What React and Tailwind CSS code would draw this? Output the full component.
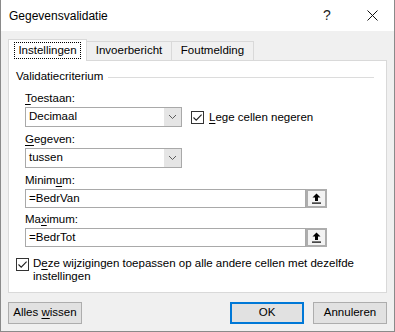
import React from 'react'

function Check() {
  return (
    <span className="w-[13px] h-[13px] border border-[#333333] bg-white flex items-center justify-center shrink-0">
      <svg width="11" height="11" viewBox="0 0 11 11">
        <path d="M1.5 5.5 L4.2 8.2 L9.6 2.6" fill="none" stroke="#1f1f1f" strokeWidth="1.1" />
      </svg>
    </span>
  )
}

function Select({ value }) {
  return (
    <div className="w-[157px] h-[20px] border border-[#a9a9a9] bg-white flex shrink-0">
      <div className="flex-1 pl-[3px] flex items-center">{value}</div>
      <div className="w-[17px] bg-[#e5e5e5] flex items-center justify-center">
        <svg width="9" height="6" viewBox="0 0 9 6">
          <path d="M1 1 L4.5 4.5 L8 1" fill="none" stroke="#5c5c5c" strokeWidth="1" />
        </svg>
      </div>
    </div>
  )
}

function RefInput({ value }) {
  return (
    <div className="w-[302px] h-[19px] flex">
      <div className="flex-1 border border-[#a9a9a9] bg-white pl-[3px] flex items-center">{value}</div>
      <div className="w-[21px] border-2 border-[#adadad] bg-[#f3f3f3] flex items-center justify-center">
        <svg width="9" height="11" viewBox="0 0 9 11">
          <path d="M4.5 0.5 L8.5 4.5 L6 4.5 L6 8 L3 8 L3 4.5 L0.5 4.5 Z" fill="#000" />
          <rect x="0" y="9.5" width="9" height="1.2" fill="#000" />
        </svg>
      </div>
    </div>
  )
}

function Label({ before, u, after }) {
  return (
    <div className="h-[16px] leading-[16px]">
      {before}
      <span className="underline underline-offset-2">{u}</span>
      {after}
    </div>
  )
}

function Button({ children, primary }) {
  return (
    <button
      className={`w-[74px] h-[22px] bg-[#e1e1e1] flex items-center justify-center ${
        primary ? 'border-2 border-[#0078d7]' : 'border border-[#adadad]'
      }`}
    >
      {children}
    </button>
  )
}

export default function App() {
  return (
    <div className="w-[395px] h-[332px] bg-[#f0f0f0] border-x border-b border-[#8a8a8a] flex flex-col text-[11.5px] text-black font-['Liberation_Sans',Arial,sans-serif] overflow-hidden">
      {/* title bar */}
      <div className="h-[31px] bg-white flex items-center pl-[8px] shrink-0">
        <span className="text-[12px]">Gegevensvalidatie</span>
        <span className="ml-auto w-[20px] text-center text-[14px] text-[#222]">?</span>
        <span className="ml-[25px] mr-[12px] w-[20px] flex items-center justify-center">
          <svg width="11" height="11" viewBox="0 0 11 11">
            <path d="M0.5 0.5 L10.5 10.5 M10.5 0.5 L0.5 10.5" stroke="#111" strokeWidth="1" />
          </svg>
        </span>
      </div>

      <div className="px-[7px] flex flex-col">
        {/* tabs */}
        <div className="mt-[7px] h-[22px] flex items-end">
          <div className="w-[79px] h-[22px] bg-white border border-b-0 border-[#d9d9d9] relative z-10 -mb-px flex items-center justify-center">
            <span className="px-[3px] h-[17px] leading-[15px] border border-dotted border-black">Instellingen</span>
          </div>
          <div className="w-[85px] h-[19px] border border-b-0 border-l-0 border-[#d9d9d9] flex items-center justify-center">
            Invoerbericht
          </div>
          <div className="w-[82px] h-[19px] border border-b-0 border-l-0 border-[#d9d9d9] flex items-center justify-center">
            Foutmelding
          </div>
        </div>

        {/* panel */}
        <div className="h-[233px] bg-white border border-[#d9d9d9] px-[7px] flex flex-col">
          <div className="mt-[8px] h-[16px] flex items-center gap-[5px] mr-[5px]">
            <span>Validatiecriterium</span>
            <div className="flex-1 h-px bg-[#dcdcdc]" />
          </div>

          <div className="pl-[9px] flex flex-col">
            <div className="mt-[5px]">
              <Label u="T" after="oestaan:" />
            </div>
            <div className="mt-px flex items-center">
              <Select value="Decimaal" />
              <div className="ml-[9px] flex items-center gap-[5px]">
                <Check />
                <Label u="L" after="ege cellen negeren" />
              </div>
            </div>
            <div className="mt-[4px]">
              <Label u="G" after="egeven:" />
            </div>
            <div className="mt-px">
              <Select value="tussen" />
            </div>
            <div className="mt-[4px]">
              <Label before="Minim" u="u" after="m:" />
            </div>
            <div className="mt-px">
              <RefInput value="=BedrVan" />
            </div>
            <div className="mt-[3px]">
              <Label before="Ma" u="x" after="imum:" />
            </div>
            <div className="mt-px">
              <RefInput value="=BedrTot" />
            </div>
          </div>

          <div className="mt-[10px] flex items-start gap-[4px]">
            <div className="mt-px">
              <Check />
            </div>
            <div className="leading-[13px]">
              D<span className="underline underline-offset-2">e</span>ze wijzigingen toepassen op alle andere cellen met dezelfde
              <br />
              instellingen
            </div>
          </div>
        </div>

        {/* buttons */}
        <div className="mt-[9px] flex">
          <Button>
            <span>
              Alles <span className="underline underline-offset-2">w</span>issen
            </span>
          </Button>
          <div className="ml-auto flex gap-[9px]">
            <Button primary>OK</Button>
            <Button>Annuleren</Button>
          </div>
        </div>
      </div>
    </div>
  )
}
